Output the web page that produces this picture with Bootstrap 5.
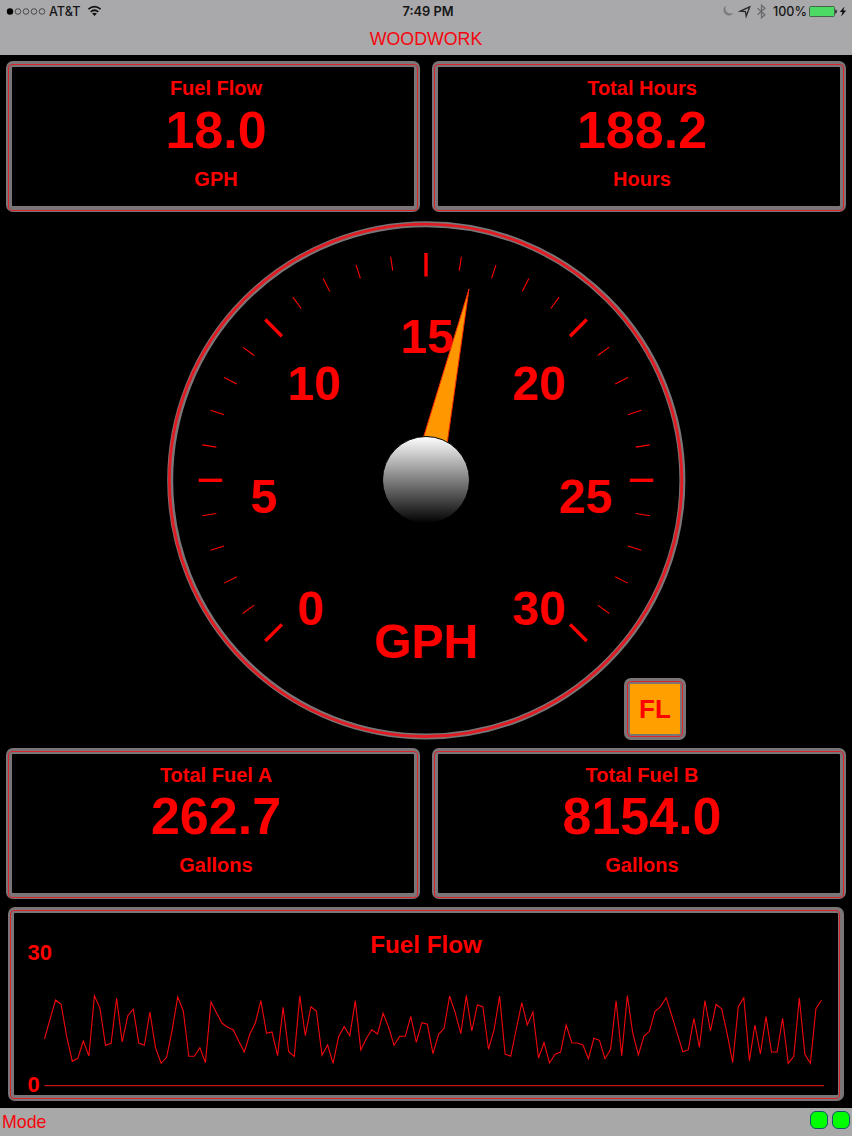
<!DOCTYPE html>
<html lang="en">
<head>
<meta charset="utf-8">
<meta name="viewport" content="width=device-width, initial-scale=1">
<title>Woodwork</title>
<link href="https://cdn.jsdelivr.net/npm/bootstrap@5.3.0/dist/css/bootstrap.min.css" rel="stylesheet">
<style>
  body { font-family: "Liberation Sans", Arial, sans-serif; color: #f00; background: #000; height: 1136px; width: 852px; }
  .topbar { height: 55px; background: #a9a8aa; }
  .statusbar { height: 23px; font: 500 12.6px/23px Inter, sans-serif; color: #161616; padding: 0 5px 0 6px; }
  .statusbar svg { display: block; }
  .carrier { margin-left: 3px; }
  .wifi { left: 87px; }
  .clock { padding-left: 4px; font-size: 12.8px; }
  .battery { margin-left: 2px; }
  .page-title { font-size: 17.8px; line-height: 32px; color: #f5060e; }
  .frame { position: relative; border: 6px solid #7b7577; border-radius: 7px; }
  .frame::after { content: ""; position: absolute; inset: var(--line, -3px -4px -5px -4px); border: 1px solid #dc222b; border-radius: 4px; pointer-events: none; }
  .readouts { padding: 0 6px; gap: 12px; }
  .readouts-top { margin-top: 6px; }
  .readout { height: 151px; font-weight: 700; padding: 9px 0 0 6px; }
  .label-text { font-size: 20px; line-height: 24px; }
  .value-text { font-size: 52px; line-height: 60px; margin: -1px 0 7px; }
  .readouts-top .value-text { margin: 0 0 7px; }
  .gauge-area { height: 536px; }
  .gauge-area svg, .trend svg { display: block; overflow: visible; }
  .gauge-area text, .trend text { font-weight: 700; fill: #f00; }
  .flow-alert { position: absolute; left: 624px; top: 466px; width: 62px; height: 62px; background: #ff9f00; font-size: 26px; line-height: 50px; font-weight: 700; --line: -3px -3px -3px -3px; }
  .trend { margin: 8px 8px 7px; height: 194px; --line: -3px -2px -4px -4px; }
  .footbar { height: 28px; background: #a9a8a8; padding: 0 2px; font-size: 17.8px; line-height: 29px; color: #f5060e; }
  .lamp { width: 18px; height: 18px; background: #0f0; border: 1px solid #16566a; border-radius: 6px; margin: -5px 0 0 4px; }
</style>
</head>
<body class="d-flex flex-column overflow-hidden">
<header class="topbar text-center">
  <div class="statusbar d-flex align-items-center position-relative">
    <svg width="40" height="23" fill="none" stroke="#333" stroke-width=".8"><circle cx="4" cy="11.5" r="3.2" fill="#000" stroke="none"/><circle cx="12" cy="11.5" r="2.8"/><circle cx="20" cy="11.5" r="2.8"/><circle cx="28" cy="11.5" r="2.8"/><circle cx="36" cy="11.5" r="2.8"/></svg>
    <span class="carrier">AT&amp;T</span>
    <svg class="wifi position-absolute" width="15" height="23" fill="none" stroke="#111" stroke-width="1.7"><path d="M1.4 9.2Q7.5 4 13.6 9.2M3.7 11.8Q7.5 8.7 11.3 11.8"/><path d="M5.1 13.5Q7.5 11.8 9.9 13.5L7.5 16Z" fill="#111" stroke="none"/></svg>
    <span class="clock position-absolute start-50 translate-middle-x fw-semibold text-nowrap">7:49 PM</span>
    <div class="ms-auto d-flex">
      <svg width="52" height="23" fill="none"><path d="M4.3 6.4A5 5 0 1 0 11.6 13.6C6.6 15 3 11 4.3 6.4Z" fill="#77767a" stroke="#77767a" stroke-width=".6"/><path d="M19.3 11.2L28.8 6.8L25.2 16.3L24.5 11.6Z" stroke="#2a2a2a" stroke-width="1.3"/><path d="M36.5 8.2L44 14.7L40.5 17.8V5.2L44 8.3L36.5 14.8" stroke="#6c6b6e" stroke-width="1.3"/></svg>
      <span>100%</span>
      <svg class="battery" width="38" height="23"><rect x=".5" y="6.5" width="25" height="10" rx="1" fill="#4cd964" stroke="#46634c"/><path d="M26.3 9.5Q27.8 9.7 27.8 11.5T26.3 13.7Z" fill="#111"/><path d="M35.4 6.5L30.8 12H33.4L32.2 16.5L37.2 10.6H34.4Z" fill="#111"/></svg>
    </div>
  </div>
  <div class="page-title">WOODWORK</div>
</header>
<main class="flex-grow-1 d-flex flex-column">
  <section class="readouts readouts-top d-flex text-center">
    <div class="readout frame w-50"><div class="label-text">Fuel Flow</div><div class="value-text">18.0</div><div class="label-text">GPH</div></div>
    <div class="readout frame w-50"><div class="label-text">Total Hours</div><div class="value-text">188.2</div><div class="label-text">Hours</div></div>
  </section>
  <section class="gauge-area position-relative">
    <svg width="852" height="536" viewBox="0 212 852 536">
      <defs><linearGradient id="hub" x1="0" y1="0" x2="0" y2="1"><stop offset="0" stop-color="#fff"/><stop offset="1" stop-color="#000"/></linearGradient></defs>
      <circle cx="426.3" cy="480.3" r="256.1" fill="none" stroke="#7b7577" stroke-width="6"/>
      <circle cx="425.6" cy="480.3" r="256.2" fill="none" stroke="#e21a21" stroke-width="2.8"/>
      <g id="ticks" stroke="#f00"></g>
      <g font-size="48" text-anchor="middle">
        <text x="310.5" y="625">0</text><text x="263.5" y="512.5">5</text><text x="314" y="399.5">10</text><text x="427" y="353">15</text><text x="539" y="399.5">20</text><text x="585.5" y="512.5">25</text><text x="539" y="625">30</text><text x="426" y="658">GPH</text>
      </g>
      <path d="M469 289L416.5 460L444.8 460Z" fill="#ff9800" stroke="#f22a00" stroke-width="1"/>
      <circle cx="426" cy="480" r="43.5" fill="url(#hub)" stroke="#000" stroke-width="1"/>
    </svg>
    <div class="flow-alert frame text-center">FL</div>
  </section>
  <section class="readouts d-flex text-center">
    <div class="readout frame w-50"><div class="label-text">Total Fuel A</div><div class="value-text">262.7</div><div class="label-text">Gallons</div></div>
    <div class="readout frame w-50"><div class="label-text">Total Fuel B</div><div class="value-text">8154.0</div><div class="label-text">Gallons</div></div>
  </section>
  <section class="trend frame">
    <svg width="824" height="182" viewBox="14 913 824 182">
      <text x="426" y="953" font-size="24.2" text-anchor="middle">Fuel Flow</text>
      <text x="27.5" y="959.5" font-size="22">30</text>
      <text x="27.5" y="1091.5" font-size="22">0</text>
      <path d="M44.5 1085.7H824" stroke="#c4141a" stroke-width="1.2"/>
      <polyline id="trace" fill="none" stroke="#f0070c" stroke-width="1.1"/>
    </svg>
  </section>
</main>
<footer class="footbar d-flex align-items-center">
  <span>Mode</span>
  <span class="lamp ms-auto"></span><span class="lamp"></span>
</footer>
<script src="https://cdn.jsdelivr.net/npm/bootstrap@5.3.0/dist/js/bootstrap.bundle.min.js"></script>
<script>
  // Dial scale: 0 to 30 over 270 degrees, a long tick every fifth step
  let marks = '';
  for (let i = 0; i <= 30; i++) {
    const major = i % 5 === 0;
    marks += `<path d="M426 ${major ? 253 : 253.8}V${major ? 276.5 : 268}" stroke-width="${major ? 3.4 : 1.1}" transform="rotate(${i * 9 - 135} 426 480.3)"/>`;
  }
  document.getElementById('ticks').innerHTML = marks;

  // Fuel flow samples, in thirds of a pixel below the top of the trend area
  const samples = [417,358,300,313,410,484,475,423,468,287,325,436,430,295,426,347,327,429,436,336,
    443,490,472,391,291,333,469,469,443,488,306,338,370,382,389,424,456,403,368,302,400,396,467,322,
    455,469,287,407,320,333,466,435,490,410,380,407,302,450,415,389,402,340,382,436,
    409,409,349,427,368,373,461,403,385,288,338,401,287,393,314,321,448,389,288,462,
    469,387,308,375,336,474,428,489,463,456,375,
    428,429,435,476,415,421,476,448,302,467,287,400,465,409,394,334,320,293,345,400,
    455,449,355,442,302,393,313,326,400,488,320,293,482,375,462,350,456,456,355,490,
    469,293,463,490,326,301];
  document.getElementById('trace').setAttribute('points',
    samples.map((y, i) => `${(44.5 + i * 5.55).toFixed(1)},${(900 + y / 3).toFixed(1)}`).join(' '));
</script>
</body>
</html>
